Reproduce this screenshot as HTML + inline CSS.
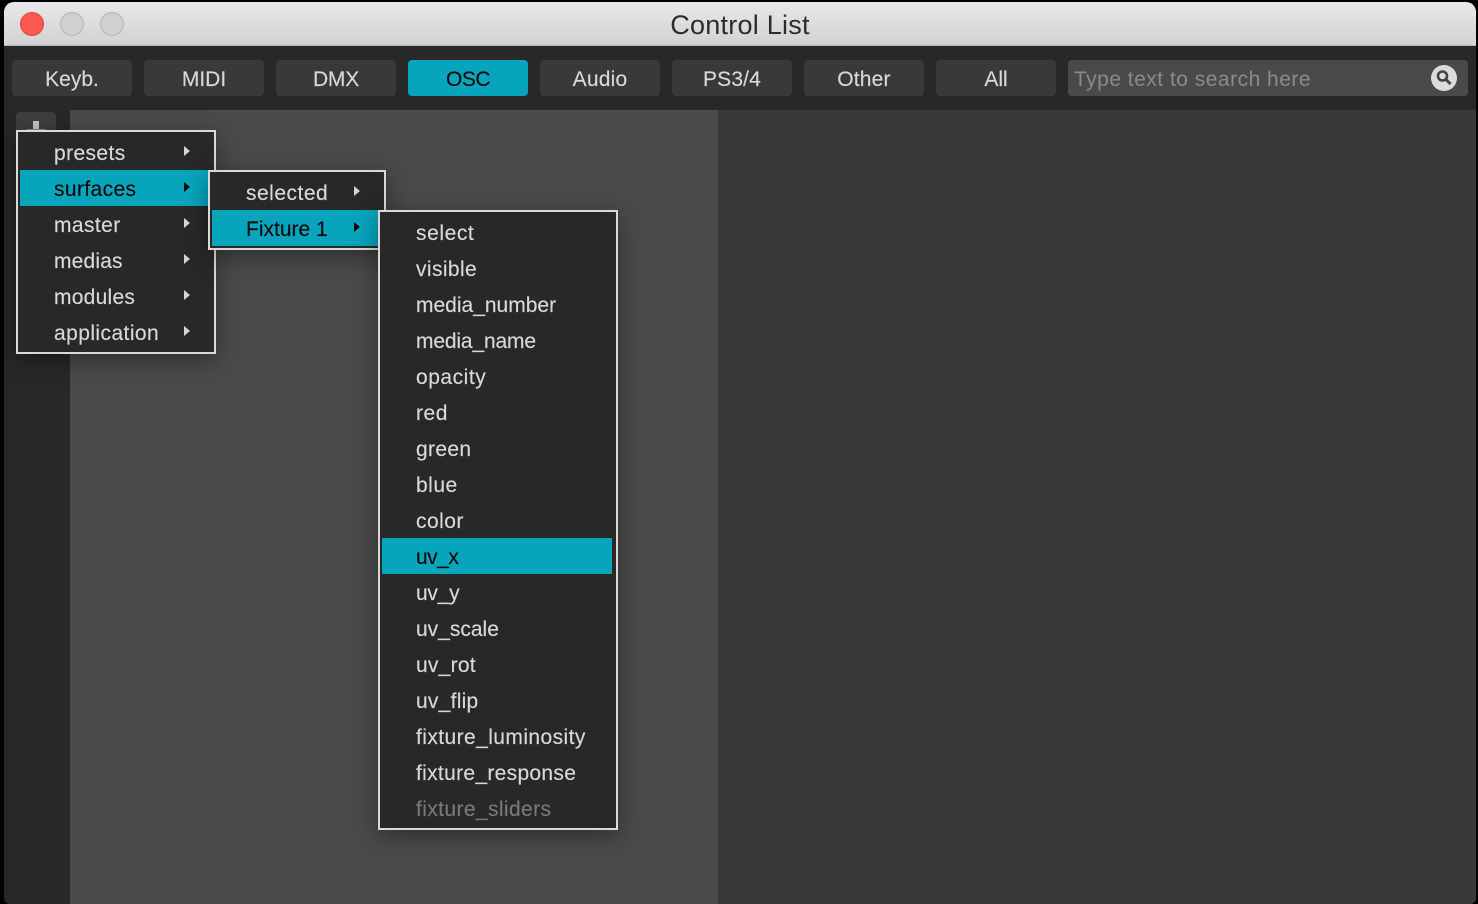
<!DOCTYPE html>
<html><head><meta charset="utf-8"><style>
*{box-sizing:border-box;margin:0;padding:0}
html,body{width:1478px;height:904px;background:#000;overflow:hidden}
body{position:relative;font-family:"Liberation Sans",sans-serif}
#win{position:absolute;left:4px;top:2px;width:1472px;height:902px;background:#282828;border-radius:10px 10px 6px 6px;overflow:hidden}
.abs,.t,.tab,.menu,.hl,.i,.ar{position:absolute}
#title{position:absolute;left:0;top:0;width:1472px;height:44px;background:linear-gradient(#e8e8e8,#d2d2d2);border-bottom:1px solid #b4b4b4}
#title span{position:absolute;left:0;width:100%;top:8px;text-align:center;font-size:27px;line-height:30px;color:#2c2c2c;letter-spacing:.25px}
.dot{position:absolute;top:10px;width:24px;height:24px;border-radius:50%;background:#d0d0d0;border:1px solid #b5b5b5}
.tab{top:58px;width:120px;height:36px;border-radius:4px;background:#393939;color:#d8d8d8;font-size:21px;line-height:40px;text-align:center;-webkit-text-stroke:.15px #d8d8d8}
.tab.on{background:#07a5bd;color:#0b0b0b;-webkit-text-stroke:.15px #0b0b0b;letter-spacing:-.5px}
#search{position:absolute;left:1064px;top:58px;width:400px;height:36px;border-radius:4px;background:#4a4a4a;color:#8a8a8a;font-size:21px;line-height:40px;padding-left:6px;letter-spacing:.49px}
.menu{background:#282828;border:2px solid #d9d9d9;box-shadow:0 6px 22px rgba(0,0,0,.38)}
.hl{background:#07a5bd}
.i{font-size:21px;line-height:36px;color:#d8d8d8;white-space:nowrap;letter-spacing:.25px;-webkit-text-stroke:.15px #d8d8d8}
.i.s{color:#0a0a0a;-webkit-text-stroke:.15px #0a0a0a}
.i.d{color:#787878;-webkit-text-stroke:.15px #787878}
.ar{width:0;height:0;border-left:6px solid #d4d4d4;border-top:5px solid transparent;border-bottom:5px solid transparent}
.ar.s{border-left-color:#0a0a0a}
</style></head><body>
<div id="win">
<div id="title"><div class="dot" style="left:16px;background:#fc5753;border-color:#df4744"></div><div class="dot" style="left:56px"></div><div class="dot" style="left:96px"></div><span>Control List</span></div>
<div class="tab" style="left:8px">Keyb.</div>
<div class="tab" style="left:140px">MIDI</div>
<div class="tab" style="left:272px;letter-spacing:-.2px">DMX</div>
<div class="tab on" style="left:404px">OSC</div>
<div class="tab" style="left:536px;letter-spacing:.2px">Audio</div>
<div class="tab" style="left:668px;letter-spacing:.15px">PS3/4</div>
<div class="tab" style="left:800px;letter-spacing:.2px">Other</div>
<div class="tab" style="left:932px">All</div>
<div id="search">Type text to search here
<svg style="position:absolute;left:363px;top:5px" width="26" height="26" viewBox="0 0 26 26"><circle cx="13" cy="13" r="13" fill="#dcdcdc"/><circle cx="11.5" cy="11" r="4.5" fill="none" stroke="#444" stroke-width="2.6"/><path d="M15 14.5l4.5 4.5" stroke="#444" stroke-width="3" fill="none"/></svg></div>
<div class="abs" style="left:66px;top:108px;width:648px;height:794px;background:#4a4a4a"></div>
<div class="abs" style="left:714px;top:108px;width:758px;height:794px;background:#393939"></div>
<div class="abs" style="left:12px;top:110px;width:40px;height:40px;border-radius:4px;background:#3e3e3e"></div>
<div class="abs" style="left:29px;top:119px;width:6px;height:12px;background:#c4c4c4"></div>
<div class="abs" style="left:22px;top:127px;width:20px;height:3px;background:#8a8a8a"></div>
</div>

<div class="menu" style="left:16px;top:130px;width:200px;height:224px"></div>
<div class="hl" style="left:20px;top:170px;width:188px;height:36px"></div>
<div class="i" style="left:54px;top:136px;letter-spacing:.39px">presets</div><div class="ar" style="left:184px;top:146px"></div>
<div class="i s" style="left:54px;top:172px;letter-spacing:.38px">surfaces</div><div class="ar s" style="left:184px;top:182px"></div>
<div class="i" style="left:54px;top:208px;letter-spacing:.42px">master</div><div class="ar" style="left:184px;top:218px"></div>
<div class="i" style="left:54px;top:244px;letter-spacing:.17px">medias</div><div class="ar" style="left:184px;top:254px"></div>
<div class="i" style="left:54px;top:280px">modules</div><div class="ar" style="left:184px;top:290px"></div>
<div class="i" style="left:54px;top:316px;letter-spacing:.43px">application</div><div class="ar" style="left:184px;top:326px"></div>

<div class="menu" style="left:208px;top:170px;width:178px;height:80px"></div>
<div class="hl" style="left:212px;top:210px;width:168px;height:36px"></div>
<div class="i" style="left:246px;top:176px;letter-spacing:.5px">selected</div><div class="ar" style="left:354px;top:186px"></div>
<div class="i s" style="left:246px;top:212px;letter-spacing:0">Fixture 1</div><div class="ar s" style="left:354px;top:222px"></div>

<div class="menu" style="left:378px;top:210px;width:240px;height:620px"></div>
<div class="hl" style="left:382px;top:538px;width:230px;height:36px"></div>
<div class="i" style="left:416px;top:216px;letter-spacing:.58px">select</div>
<div class="i" style="left:416px;top:252px;letter-spacing:.39px">visible</div>
<div class="i" style="left:416px;top:288px;letter-spacing:0">media_number</div>
<div class="i" style="left:416px;top:324px;letter-spacing:-.15px">media_name</div>
<div class="i" style="left:416px;top:360px;letter-spacing:.53px">opacity</div>
<div class="i" style="left:416px;top:396px;letter-spacing:.55px">red</div>
<div class="i" style="left:416px;top:432px;letter-spacing:.35px">green</div>
<div class="i" style="left:416px;top:468px;letter-spacing:.5px">blue</div>
<div class="i" style="left:416px;top:504px;letter-spacing:.45px">color</div>
<div class="i s" style="left:416px;top:540px;letter-spacing:-.5px">uv_x</div>
<div class="i" style="left:416px;top:576px;letter-spacing:-.25px">uv_y</div>
<div class="i" style="left:416px;top:612px;letter-spacing:0">uv_scale</div>
<div class="i" style="left:416px;top:648px">uv_rot</div>
<div class="i" style="left:416px;top:684px">uv_flip</div>
<div class="i" style="left:416px;top:720px;letter-spacing:.42px">fixture_luminosity</div>
<div class="i" style="left:416px;top:756px;letter-spacing:.31px">fixture_response</div>
<div class="i d" style="left:416px;top:792px;letter-spacing:.39px">fixture_sliders</div>
</body></html>
